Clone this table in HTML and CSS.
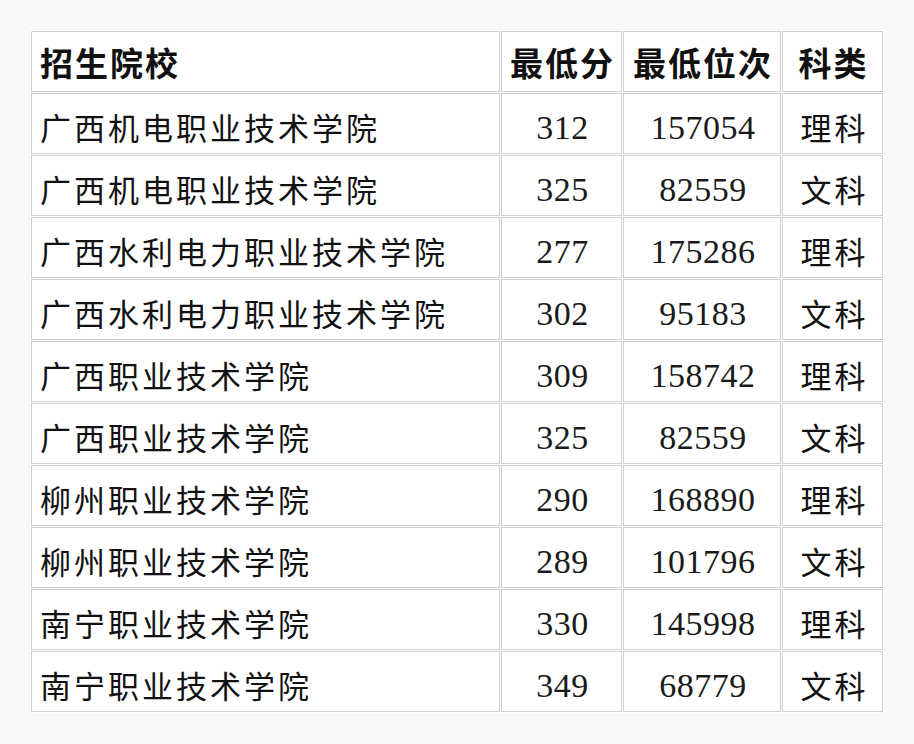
FILE: index.html
```html
<!DOCTYPE html>
<html lang="zh">
<head>
<meta charset="utf-8">
<link rel="stylesheet" href="styles.css">
</head>
<body>
<table class="score-table">
  <thead>
    <tr><th class="name c-name">招生院校</th><th class="c-score">最低分</th><th class="c-rank">最低位次</th><th class="c-type">科类</th></tr>
  </thead>
  <tbody>
    <tr><td class="name">广西机电职业技术学院</td><td class="num">312</td><td class="num">157054</td><td>理科</td></tr>
    <tr><td class="name">广西机电职业技术学院</td><td class="num">325</td><td class="num">82559</td><td>文科</td></tr>
    <tr><td class="name">广西水利电力职业技术学院</td><td class="num">277</td><td class="num">175286</td><td>理科</td></tr>
    <tr><td class="name">广西水利电力职业技术学院</td><td class="num">302</td><td class="num">95183</td><td>文科</td></tr>
    <tr><td class="name">广西职业技术学院</td><td class="num">309</td><td class="num">158742</td><td>理科</td></tr>
    <tr><td class="name">广西职业技术学院</td><td class="num">325</td><td class="num">82559</td><td>文科</td></tr>
    <tr><td class="name">柳州职业技术学院</td><td class="num">290</td><td class="num">168890</td><td>理科</td></tr>
    <tr><td class="name">柳州职业技术学院</td><td class="num">289</td><td class="num">101796</td><td>文科</td></tr>
    <tr><td class="name">南宁职业技术学院</td><td class="num">330</td><td class="num">145998</td><td>理科</td></tr>
    <tr><td class="name">南宁职业技术学院</td><td class="num">349</td><td class="num">68779</td><td>文科</td></tr>
  </tbody>
</table>
</body>
</html>
```
FILE: styles.css
```css
html, body {
  margin: 0;
  padding: 0;
  background: #f8f8f8;
}
body {
  padding: 30px 0 0 30px;
  font-family: "Noto Sans CJK SC", "Liberation Sans", sans-serif;
  color: #111;
}
.score-table {
  border-collapse: separate;
  border-spacing: 1px;
  background: #ffffff;
  table-layout: fixed;
  width: 854px;
}
.c-name { width: 469px; }
.c-score { width: 121px; }
.c-rank { width: 158px; }
.c-type { width: 101px; }
.score-table th,
.score-table td {
  box-sizing: border-box;
  border: 1px solid #cfcfcf;
  height: 61px;
  padding: 0;
  text-align: center;
  vertical-align: middle;
  white-space: nowrap;
  overflow: hidden;
  background: #ffffff;
  line-height: 1;
}
.score-table th {
  font-size: 33px;
  font-weight: 700;
  letter-spacing: 2px;
  padding-top: 2px;
  padding-left: 2px;
}
.score-table td {
  font-size: 31px;
  font-weight: 400;
  letter-spacing: 3px;
  padding-top: 6px;
  padding-left: 4px;
}
.score-table th.name,
.score-table td.name {
  text-align: left;
  padding-left: 8px;
}
.score-table td.num {
  font-family: "Liberation Serif", serif;
  font-size: 34px;
  letter-spacing: 0.5px;
  padding-top: 9px;
  padding-left: 2px;
  color: #1a1a1a;
}
```
